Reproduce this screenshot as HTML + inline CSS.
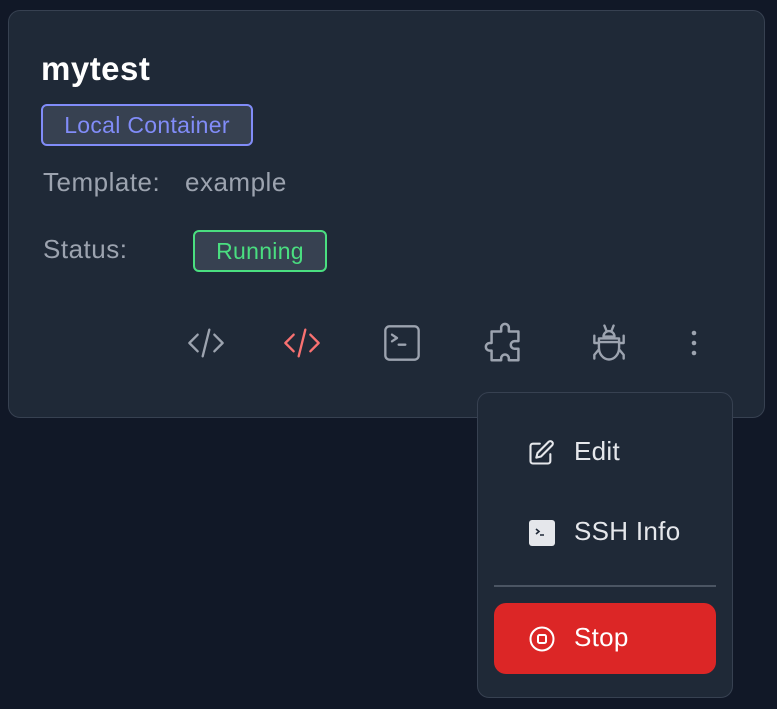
<!DOCTYPE html>
<html><head><style>
body{margin:0;width:777px;height:709px;background:#111827;font-family:"Liberation Sans",sans-serif;position:relative;overflow:hidden}
.card{position:absolute;left:8px;top:10px;width:757px;height:408px;background:#1f2937;border:1px solid #374151;border-radius:12px;box-sizing:border-box}
.a{position:absolute;white-space:nowrap}
.badge{position:absolute;border-radius:6px;background:#374151;box-sizing:border-box;font-size:23px;letter-spacing:0.3px;text-align:center}
svg{position:absolute}
.menu{position:absolute;left:477px;top:392px;width:256px;height:306px;background:#1f2937;border:1px solid #374151;border-radius:12px;box-sizing:border-box}
.mi{position:absolute;color:#e5e7eb;font-size:26px;letter-spacing:0.3px}
.t{font-size:26px;color:#9ca3af;letter-spacing:0.5px}
</style></head><body>
<div class="card"></div>
<div class="a" style="left:41px;top:50px;font-size:33px;font-weight:bold;color:#fff;letter-spacing:0.5px">mytest</div>
<div class="badge" style="left:41px;top:104px;width:212px;height:42px;border:2px solid #818cf8;color:#818cf8;line-height:38px">Local Container</div>
<div class="a t" style="left:43px;top:167px">Template:</div>
<div class="a t" style="left:185px;top:167px">example</div>
<div class="a t" style="left:43px;top:234px">Status:</div>
<div class="badge" style="left:193px;top:230px;width:134px;height:42px;border:2px solid #4ade80;color:#4ade80;line-height:38px">Running</div>

<svg style="left:186px;top:323px" width="40" height="40" viewBox="0 0 24 24" fill="none" stroke="#9ca3af" stroke-width="1.4" stroke-linecap="round" stroke-linejoin="round"><path d="M7 7l-5 5 5 5M17 7l5 5-5 5M14 4l-4 16"/></svg>
<svg style="left:282px;top:323px" width="40" height="40" viewBox="0 0 24 24" fill="none" stroke="#f87171" stroke-width="1.4" stroke-linecap="round" stroke-linejoin="round"><path d="M7 7l-5 5 5 5M17 7l5 5-5 5M14 4l-4 16"/></svg>
<svg style="left:381px;top:323px" width="42" height="40" viewBox="0 0 24 24" fill="none" stroke="#9ca3af" stroke-width="1.4" stroke-linecap="round" stroke-linejoin="round"><rect x="2" y="2" width="20" height="20" rx="2.5"/><path d="M6 7l3 2-3 2M10 13h4"/></svg>
<svg style="left:482px;top:320px" width="46" height="46" viewBox="0 0 24 24" fill="none" stroke="#9ca3af" stroke-width="1.3" stroke-linejoin="round"><path d="M10 4a2 2 0 114 0v2h5v5h-2a2 2 0 100 4h2v6h-5v-1a2 2 0 10-4 0v1H5v-5H4a2 2 0 110-4h1V6h5z"/></svg>
<svg style="left:587px;top:320px" width="44" height="46" viewBox="0 0 24 24" fill="none" stroke="#9ca3af" stroke-width="1.3" stroke-linecap="round" stroke-linejoin="round"><path d="M9.5 2.5l1 2.5M14.5 2.5l-1 2.5M9 8.5a3 3 0 016 0zM6.5 9.5h11v5a5.5 6.5 0 01-11 0zM6.5 12H4V8M17.5 12H20V8M6.5 15.5L4 18.5v2M17.5 15.5l2.5 3v2M6.5 11.5h11"/></svg>
<svg style="left:688px;top:328px" width="12" height="30" viewBox="0 0 12 30" fill="#9ca3af"><circle cx="6" cy="5" r="2.3"/><circle cx="6" cy="15" r="2.3"/><circle cx="6" cy="25" r="2.3"/></svg>

<div class="menu"></div>
<svg style="left:527px;top:439px" width="28" height="28" viewBox="0 0 24 24" fill="none" stroke="#e5e7eb" stroke-width="1.8" stroke-linecap="round" stroke-linejoin="round"><path d="M11 4H5a2 2 0 00-2 2v13a2 2 0 002 2h13a2 2 0 002-2v-6"/><path d="M18.5 2.5a2.1 2.1 0 013 3L12 15l-4 1 1-4z"/></svg>
<div class="mi" style="left:574px;top:436px">Edit</div>
<svg style="left:529px;top:520px" width="26" height="26" viewBox="0 0 26 26"><rect width="26" height="26" rx="3" fill="#e5e7eb"/><path d="M7 9l3 2.5-3 2.5M11 15h4" stroke="#1f2937" stroke-width="1.6" fill="none"/></svg>
<div class="mi" style="left:574px;top:516px">SSH Info</div>
<div class="a" style="left:494px;top:585px;width:222px;height:2px;background:#4b5563"></div>
<div class="a" style="left:494px;top:603px;width:222px;height:71px;background:#dc2626;border-radius:12px"></div>
<svg style="left:528px;top:625px" width="28" height="28" viewBox="0 0 28 28" fill="none" stroke="#fff" stroke-width="2"><circle cx="14" cy="14" r="11.5"/><rect x="10" y="10" width="8" height="8" rx="1.5"/></svg>
<div class="mi" style="left:574px;top:622px;color:#fff">Stop</div>
</body></html>
